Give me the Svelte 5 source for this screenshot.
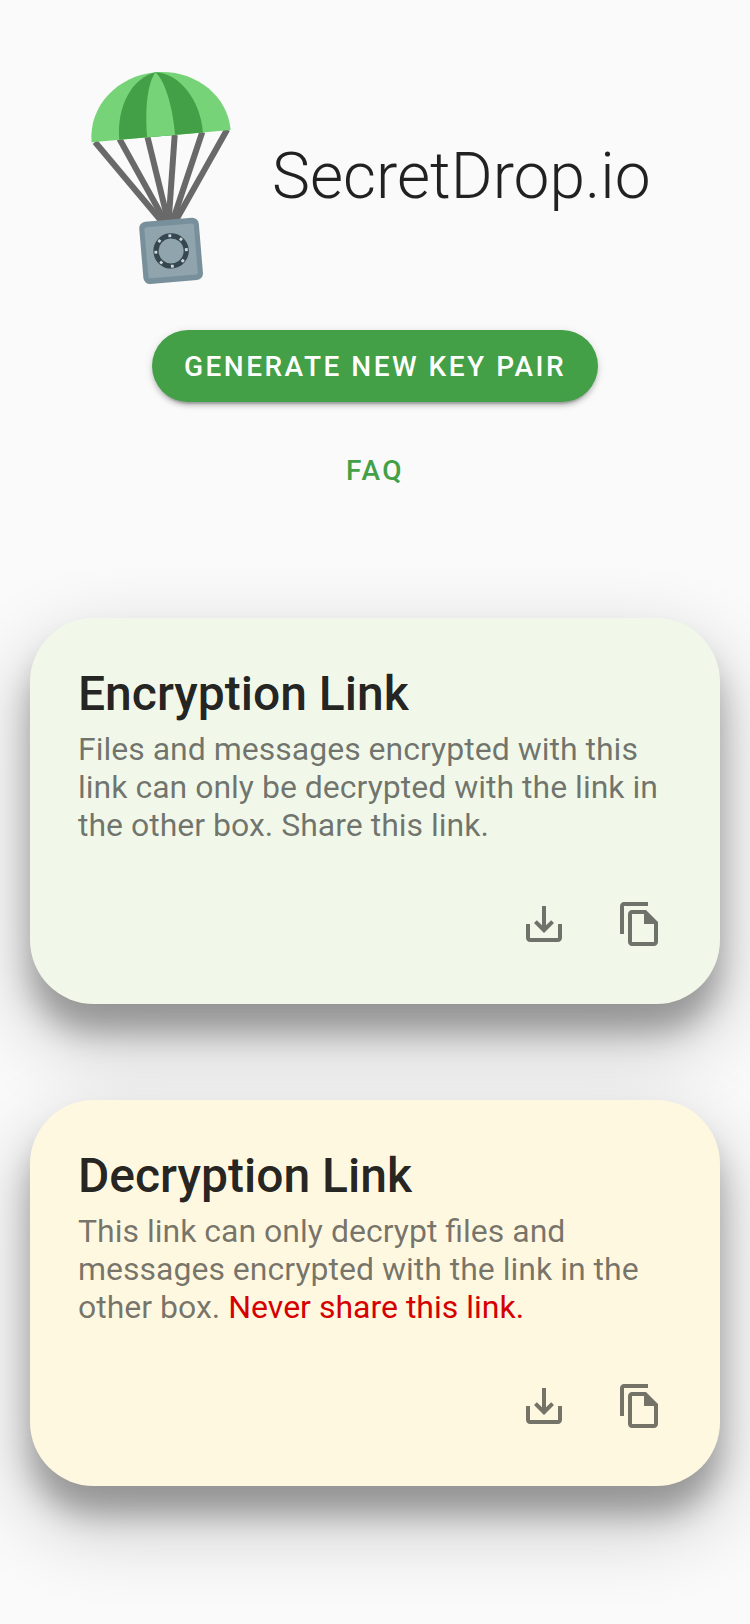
<script>
  const cards = [
    {
      tone: 'encrypt',
      title: 'Encryption Link',
      text: 'Files and messages encrypted with this link can only be decrypted with the link in the other box. Share this link.',
      warning: ''
    },
    {
      tone: 'decrypt',
      title: 'Decryption Link',
      text: 'This link can only decrypt files and messages encrypted with the link in the other box.',
      warning: 'Never share this link.'
    }
  ];

  const ropes = [
    [95, 142, 163, 223],
    [119.5, 139, 166, 223],
    [147.5, 137, 168.5, 223],
    [174.7, 135, 168.5, 223],
    [202.3, 132, 172, 223],
    [227.2, 129.5, 174.5, 223]
  ];

  const rivets = [0, 45, 90, 135, 180, 225, 270, 315];
</script>

<main>
  <header>
    <svg class="logo" viewBox="80 60 160 236" aria-hidden="true">
      <g stroke="#696969" stroke-width="6">
        {#each ropes as [x1, y1, x2, y2]}
          <line {x1} {y1} {x2} {y2} />
        {/each}
      </g>
      <g transform="translate(161.1 136.1) rotate(-5)">
        <path fill="#77d377" d="M-69.8 0C-69.8 -36 -38 -64 0 -64S69.8 -36 69.8 0Z" />
        <path fill="#43a047" d="M0 -64C-23 -61 -42 -34 -42 0H42C42 -34 23 -61 0 -64Z" />
        <path fill="#77d377" d="M0 -64C-9 -54 -14 -28 -14 0H14C14 -28 9 -54 0 -64Z" />
      </g>
      <g transform="translate(171.1 250.9) rotate(-4.8)">
        <rect x="-29.9" y="-31.2" width="59.8" height="62.4" rx="6.5" fill="#78909c" />
        <rect x="-24.8" y="-25.6" width="49.6" height="51.2" rx="2" fill="#90a4ae" />
        <circle r="15.1" fill="none" stroke="#37474f" stroke-width="5.2" />
        {#each rivets as angle}
          <rect x="-1.4" y="-16.7" width="2.8" height="2.8" fill="#cfd8dc" transform="rotate({angle})" />
        {/each}
      </g>
    </svg>
    <h1>SecretDrop.io</h1>
  </header>

  <nav>
    <button class="primary">Generate new key pair</button>
    <button class="link">FAQ</button>
  </nav>

  <section>
    {#each cards as card}
      <article class={card.tone}>
        <h2>{card.title}</h2>
        <p>{card.text}{#if card.warning}{' '}<span>{card.warning}</span>{/if}</p>
        <div class="actions">
          <button class="icon" aria-label="Download">
            <svg viewBox="0 0 24 24"><path d="M19 12v7H5v-7H3v7c0 1.1.9 2 2 2h14c1.1 0 2-.9 2-2v-7h-2zm-6 .67l2.59-2.58L17 11.5l-5 5-5-5 1.41-1.41L11 12.67V3h2z" /></svg>
          </button>
          <button class="icon" aria-label="Copy">
            <svg viewBox="0 0 24 24"><path d="M16 1H4c-1.1 0-2 .9-2 2v14h2V3h12V1zm-1 4H8c-1.1 0-1.99.9-1.99 2L6 21c0 1.1.89 2 1.99 2H19c1.1 0 2-.9 2-2V11l-6-6zM8 21V7h6v5h5v9H8z" /></svg>
          </button>
        </div>
      </article>
    {/each}
  </section>
</main>

<style>
  :global(body) {
    background: #fafafa;
  }
  main {
    box-sizing: border-box;
    height: 1624px;
    padding-top: 60px;
    overflow: hidden;
    display: flex;
    flex-direction: column;
    font-family: Roboto, sans-serif;
    color: rgba(0, 0, 0, 0.87);
  }
  header {
    display: flex;
    height: 236px;
    padding-left: 80px;
  }
  .logo {
    width: 160px;
    height: 236px;
    flex: none;
  }
  h1 {
    margin: 79px 0 0 32px;
    font-size: 64px;
    line-height: 75px;
    font-weight: 300;
    white-space: nowrap;
  }
  nav {
    display: flex;
    flex-direction: column;
    align-items: center;
    padding-top: 34px;
    gap: 32px;
  }
  button {
    border: 0;
    background: none;
    font-family: inherit;
    color: inherit;
  }
  .primary,
  .link {
    box-sizing: border-box;
    height: 72px;
    padding: 1px 32px 0;
    border-radius: 36px;
    font-size: 28px;
    line-height: 71px;
    font-weight: 500;
    letter-spacing: 2.5px;
    text-transform: uppercase;
    white-space: nowrap;
  }
  .primary {
    background: #43a047;
    color: #fff;
    box-shadow:
      0 6px 2px -4px rgba(0, 0, 0, 0.2),
      0 4px 4px 0 rgba(0, 0, 0, 0.14),
      0 2px 10px 0 rgba(0, 0, 0, 0.12);
  }
  .link {
    color: #43a047;
  }
  section {
    display: flex;
    flex-direction: column;
    gap: 96px;
    padding: 112px 30px 0;
  }
  article {
    box-sizing: border-box;
    height: 386px;
    padding: 48px 32px 32px 48px;
    border-radius: 64px;
    display: flex;
    flex-direction: column;
    box-shadow:
      0 28px 30px 0 rgba(0, 0, 0, 0.28),
      0 34px 80px 8px rgba(0, 0, 0, 0.2);
  }
  .encrypt {
    background: #f1f8e9;
  }
  .decrypt {
    background: #fff8e1;
  }
  h2 {
    margin: 0;
    font-size: 48px;
    line-height: 56px;
    font-weight: 500;
  }
  p {
    margin: 8px 0 0;
    font-size: 32px;
    line-height: 38px;
    width: 594px;
    color: rgba(0, 0, 0, 0.54);
  }
  p span {
    color: #d50000;
  }
  .actions {
    display: flex;
    justify-content: flex-end;
    margin-top: auto;
  }
  .icon {
    display: flex;
    padding: 24px;
    color: rgba(0, 0, 0, 0.54);
  }
  .icon svg {
    width: 48px;
    height: 48px;
    fill: currentColor;
  }
</style>
